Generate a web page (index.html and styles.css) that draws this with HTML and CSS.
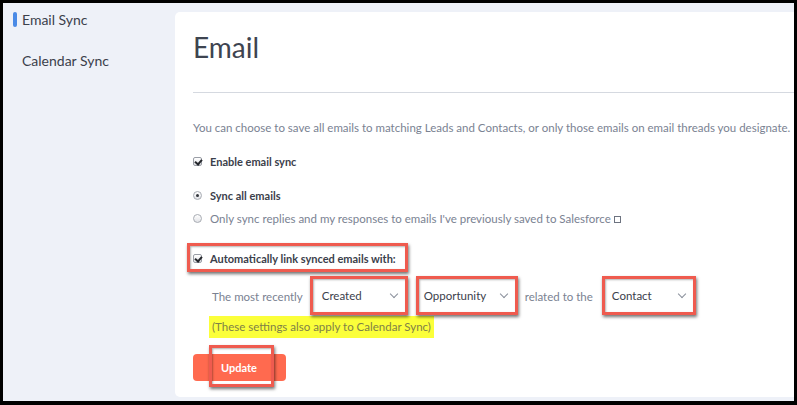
FILE: index.html
```html
<!DOCTYPE html>
<html lang="en">
<head>
    <meta charset="UTF-8">
    <meta name="viewport" content="width=device-width, initial-scale=1.0">
    <title>Email Sync</title>
    <link rel="stylesheet" href="styles.css">
</head>
<body>
    <div class="frame">
        <aside class="sidebar">
            <a class="nav-item active">Email Sync</a>
            <a class="nav-item">Calendar Sync</a>
        </aside>

        <main class="card">
            <h1>Email</h1>
            <hr class="divider">

            <p class="intro">You can choose to save all emails to matching Leads and Contacts, or only those emails on email threads you designate.</p>

            <div class="option strong">
                <span class="check on"></span>Enable email sync
            </div>
            <div class="option strong gap-sm">
                <span class="radio on"></span>Sync all emails
            </div>
            <div class="option muted gap-xs">
                <span class="radio"></span>Only sync replies and my responses to emails I've previously saved to Salesforce<span class="tofu"></span>
            </div>

            <div class="option strong auto-link mark">
                <span class="check on"></span>Automatically link synced emails with:
            </div>

            <div class="select-row">
                <span class="muted">The most recently</span>
                <div class="select mark sel-created">Created<span class="chevron"></span></div>
                <div class="select mark sel-opportunity">Opportunity<span class="chevron"></span></div>
                <span class="muted">related to the</span>
                <div class="select mark sel-contact">Contact<span class="chevron"></span></div>
            </div>

            <div class="note"><span class="highlight">(These settings also apply to Calendar Sync)</span></div>

            <button class="update-btn">Update</button>
        </main>
    </div>
</body>
</html>
```

FILE: styles.css
```css
* {
    box-sizing: border-box;
}

body {
    margin: 0;
    background-color: #000;
    padding: 3px 3px 4px 3px;
    font-family: "Lato", "Open Sans", sans-serif;
    color: #3b404b;
}

.frame {
    width: 791px;
    height: 398px;
    background-color: #eef1f8;
    display: flex;
    overflow: hidden;
}

/* sidebar */
.sidebar {
    width: 172px;
    flex-shrink: 0;
    padding-top: 8px;
    display: flex;
    flex-direction: column;
}

.nav-item {
    position: relative;
    display: block;
    height: 17px;
    line-height: 17px;
    padding-left: 19px;
    font-size: 14px;
    color: #3b404b;
}

.nav-item + .nav-item {
    margin-top: 24px;
}

.nav-item.active::before {
    content: "";
    position: absolute;
    left: 10px;
    top: 1px;
    width: 4px;
    height: 15px;
    border-radius: 2px;
    background-color: #4a8ae6;
}

/* main card */
.card {
    flex: 1;
    margin: 9px 0 4px 0;
    background-color: #fff;
    border-radius: 5px 0 0 5px;
    padding-left: 18px;
}

.card h1 {
    margin: 18px 0 0 0;
    font-size: 28px;
    line-height: 34px;
    font-weight: 400;
    color: #3e4450;
}

.divider {
    border: 0;
    height: 1px;
    background-color: #d5d9e0;
    margin: 28px 0 0 0;
}

.intro {
    margin: 25px 0 0 0;
    line-height: 20px;
    font-size: 11.5px;
    color: #7a8292;
    white-space: nowrap;
}

.option {
    display: flex;
    align-items: center;
    height: 20px;
    margin-top: 13px;
    font-size: 11px;
}

.option.gap-sm {
    margin-top: 14px;
}

.option.gap-xs {
    margin-top: 3px;
}

.strong {
    font-weight: 700;
    color: #3b404b;
}

.muted {
    color: #7a8292;
    font-size: 11.5px;
}

.check,
.radio {
    width: 9px;
    height: 9px;
    margin-right: 8px;
    border: 1px solid #9a9ea6;
    background: linear-gradient(#fff, #e2e3e7);
    flex-shrink: 0;
}

.check {
    border-radius: 2px;
    position: relative;
}

.check.on::after {
    content: "";
    position: absolute;
    left: 2px;
    top: 0px;
    width: 3px;
    height: 5px;
    border: solid #25272c;
    border-width: 0 2px 2px 0;
    transform: rotate(40deg);
}

.radio {
    border-radius: 50%;
    position: relative;
    border-color: #a8acb3;
}

.radio.on::after {
    content: "";
    position: absolute;
    left: 2px;
    top: 2px;
    width: 3px;
    height: 3px;
    border-radius: 50%;
    background-color: #33363c;
}

.tofu {
    display: inline-block;
    width: 7px;
    height: 7px;
    border: 1px solid #6d7380;
    margin-left: 3px;
    margin-top: 2px;
}

/* red annotation boxes */
.mark {
    position: relative;
}

.mark::after {
    content: "";
    position: absolute;
    top: -3px;
    left: -3px;
    right: -3px;
    bottom: -3px;
    border: 3px solid #ef5b4f;
    box-shadow: 1px 2px 3px rgba(0, 0, 0, 0.55), inset 1px 1px 2px rgba(0, 0, 0, 0.3);
    pointer-events: none;
}

.auto-link {
    display: inline-flex;
    margin-top: 20px;
    padding-right: 9px;
}

.auto-link::after {
    top: -5px;
    bottom: -4px;
    left: -6px;
}

.select-row {
    display: flex;
    align-items: center;
    height: 34px;
    margin-top: 11px;
    padding-left: 19px;
}

.select {
    height: 34px;
    display: flex;
    align-items: center;
    justify-content: space-between;
    padding: 0 8px 0 9px;
    font-size: 11.5px;
    color: #3b404b;
    background-color: #fff;
    border-bottom: 1px solid #c7ccd4;
}

.sel-created {
    width: 92px;
    margin: 0 14px 0 10px;
}

.sel-opportunity {
    width: 96px;
    padding-left: 5px;
    margin-right: 10px;
}

.sel-contact {
    width: 88px;
    padding-left: 7px;
    margin-left: 12px;
}

.chevron {
    width: 6px;
    height: 6px;
    border: solid #8a909b;
    border-width: 0 1px 1px 0;
    transform: rotate(45deg);
    margin-top: -4px;
}

.note {
    margin-top: 2px;
    padding-left: 16px;
    height: 22px;
}

.highlight {
    display: inline-block;
    height: 22px;
    line-height: 22px;
    padding: 0 3px;
    background-color: #fbff3a;
    color: #7f8147;
    font-size: 11.5px;
}

.update-btn {
    display: block;
    position: relative;
    margin-top: 17px;
    width: 93px;
    height: 27px;
    border: 0;
    border-radius: 4px;
    background-color: #ff6a4f;
    color: #fff;
    font-family: "Lato", sans-serif;
    font-weight: 700;
    font-size: 11px;
    text-align: left;
    padding-left: 28px;
}

.update-btn::after {
    content: "";
    position: absolute;
    top: -9px;
    bottom: -6px;
    left: 16px;
    right: 12px;
    border: 3px solid #ef5b4f;
    box-shadow: 1px 2px 3px rgba(0, 0, 0, 0.55), inset 1px 1px 2px rgba(0, 0, 0, 0.3);
}
```
